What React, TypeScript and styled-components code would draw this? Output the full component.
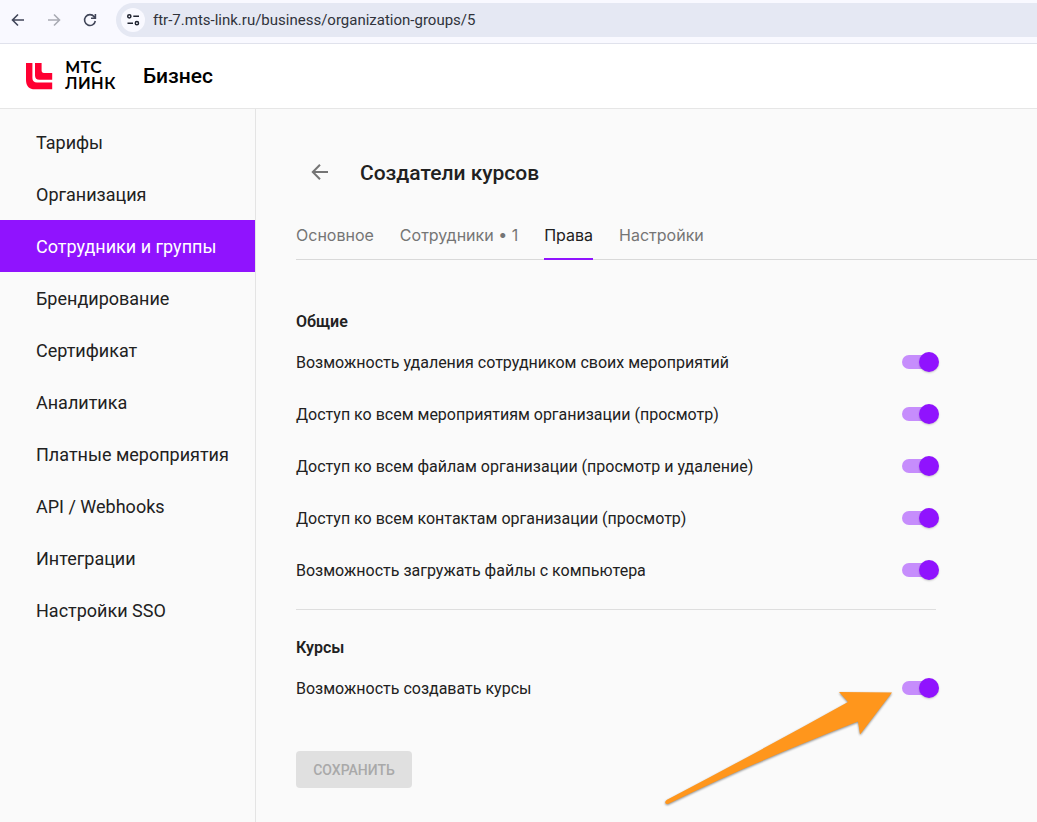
import React from "react";
import styled, { createGlobalStyle } from "styled-components";

const GlobalStyle = createGlobalStyle`
  * { box-sizing: border-box; }
  html, body, #root { height: 100%; }
  body {
    margin: 0;
    background: #fafafa;
    color: #212121;
    font-family: Roboto, "Noto Sans", sans-serif;
    font-size: 16px;
    overflow-x: hidden;
  }
  button, input { font-family: inherit; }
`;

const Page = styled.div`
  min-height: 100%;
  display: flex;
  flex-direction: column;
`;

const BrowserBar = styled.div`
  display: flex;
  align-items: center;
  gap: 16px;
  height: 44px;
  padding: 0 0 4px 8px;
  background: #f9f9ff;
  border-bottom: 1px solid #e0e2ec;
`;

const BarButton = styled.button<{ $color?: string }>`
  display: flex;
  width: 20px;
  height: 20px;
  padding: 0;
  border: 0;
  background: none;
  color: ${(p) => p.$color ?? "#414659"};
`;

const Address = styled.div`
  display: flex;
  align-items: center;
  gap: 8px;
  flex: 1;
  height: 34px;
  padding-left: 5px;
  border-radius: 17px 0 0 17px;
  background: #e5e8f3;
`;

const SiteButton = styled.button`
  display: flex;
  padding: 0;
  border: 0;
  border-radius: 50%;
  background: #f9f9ff;
  color: #1f2330;
`;

const AddressInput = styled.input`
  flex: 1;
  min-width: 0;
  padding: 0;
  border: 0;
  outline: 0;
  background: none;
  color: #30333b;
  font-size: 15px;
`;

const Header = styled.header`
  display: flex;
  align-items: center;
  height: 65px;
  padding-left: 25px;
  background: #fff;
  border-bottom: 1px solid #e6e6e6;
`;

const Brand = styled.a`
  display: flex;
  align-items: center;
  gap: 12px;
  width: 118px;
  color: #000;
  text-decoration: none;
`;

const BrandName = styled.span`
  font: 600 16px/16px Montserrat, "DejaVu Sans", sans-serif;
`;

const Product = styled.span`
  font-size: 21px;
  font-weight: 500;
  color: #000;
`;

const Body = styled.div`
  display: flex;
  flex: 1;
`;

const Sidebar = styled.nav`
  flex: 0 0 256px;
  padding-top: 7px;
  border-right: 1px solid #e4e4e4;
`;

const NavLink = styled.a<{ $active: boolean }>`
  display: flex;
  align-items: center;
  height: 52px;
  padding-left: 36px;
  font-size: 18px;
  white-space: nowrap;
  text-decoration: none;
  color: ${(p) => (p.$active ? "#fff" : "#212121")};
  background: ${(p) => (p.$active ? "#9013fe" : "transparent")};
`;

const Main = styled.main`
  flex: 1;
  min-width: 0;
  padding: 44px 0 34px 40px;
`;

const TitleRow = styled.div`
  display: flex;
  align-items: center;
  gap: 32px;
  height: 40px;
  padding-left: 12px;
`;

const BackButton = styled.button`
  display: flex;
  padding: 0;
  border: 0;
  background: none;
  color: #757575;
`;

const Title = styled.h1`
  margin: 0;
  font-size: 21px;
  font-weight: 500;
`;

const Tabs = styled.div`
  display: flex;
  gap: 26px;
  height: 67px;
  border-bottom: 1px solid #d9d9d9;
  font-family: Inter, sans-serif;
`;

const Tab = styled.a<{ $active: boolean }>`
  display: flex;
  align-items: flex-end;
  height: 67px;
  padding-bottom: 13px;
  white-space: nowrap;
  text-decoration: none;
  color: ${(p) => (p.$active ? "#212121" : "#757575")};
  border-bottom: 2px solid ${(p) => (p.$active ? "#9013fe" : "transparent")};
`;

const Form = styled.form`
  max-width: 640px;
  padding-top: 50px;
`;

const Section = styled.section`
  position: relative;
  & + & {
    margin-top: 13px;
    padding-top: 26px;
    border-top: 1px solid #dedede;
  }
`;

const SectionTitle = styled.h2`
  margin: 0;
  font-size: 16px;
  line-height: 24px;
  font-weight: 600;
`;

const Row = styled.label`
  display: flex;
  align-items: center;
  justify-content: space-between;
  height: 52px;
  &:first-of-type { margin-top: 2px; }
`;

const Switch = styled.input`
  appearance: none;
  flex: none;
  display: flex;
  align-items: center;
  width: 34px;
  height: 14px;
  margin: 0;
  border-radius: 7px;
  background: #bdbdbd;
  &::before {
    content: "";
    flex: none;
    width: 20px;
    height: 20px;
    border-radius: 50%;
    background: #fff;
    box-shadow: 0 1px 2px rgba(0, 0, 0, 0.2);
  }
  &:checked { background: #c68dfc; }
  &:checked::before { margin-left: 17px; background: #9013fe; }
`;

const SaveButton = styled.button`
  height: 37px;
  width: 116px;
  margin-top: 37px;
  padding: 0;
  border: 0;
  border-radius: 4px;
  background: #e0e0e0;
  color: #a9a9a9;
  font-size: 14px;
  font-weight: 500;
`;

const Pointer = styled.svg`
  position: absolute;
  right: 36px;
  top: 74px;
  pointer-events: none;
`;

const navItems = [
  "Тарифы", "Организация", "Сотрудники и группы", "Брендирование", "Сертификат",
  "Аналитика", "Платные мероприятия", "API / Webhooks", "Интеграции", "Настройки SSO",
];
const tabs = ["Основное", "Сотрудники • 1", "Права", "Настройки"];
const commonRights = [
  "Возможность удаления сотрудником своих мероприятий",
  "Доступ ко всем мероприятиям организации (просмотр)",
  "Доступ ко всем файлам организации (просмотр и удаление)",
  "Доступ ко всем контактам организации (просмотр)",
  "Возможность загружать файлы с компьютера",
];

function Right({ label }: { label: string }) {
  return (
    <Row>
      {label}
      <Switch type="checkbox" role="switch" defaultChecked />
    </Row>
  );
}

export default function App() {
  return (
    <>
      <GlobalStyle />
      <Page>
        <BrowserBar>
          <BarButton aria-label="Назад">
            <svg width="20" height="20" fill="none" stroke="currentColor" strokeWidth="1.6">
              <path d="M16 10H5M10 4.5L4.5 10L10 15.5" />
            </svg>
          </BarButton>
          <BarButton aria-label="Вперёд" $color="#a9abb4">
            <svg width="20" height="20" fill="none" stroke="currentColor" strokeWidth="1.6">
              <path d="M4 10H15M10 4.5L15.5 10L10 15.5" />
            </svg>
          </BarButton>
          <BarButton aria-label="Обновить">
            <svg width="20" height="20" fill="none" stroke="currentColor" strokeWidth="1.6">
              <path d="M15.3 11A5.4 5.4 0 1 1 14.2 6.7L15.3 8M15.4 4V8.3H11" />
            </svg>
          </BarButton>
          <Address>
            <SiteButton aria-label="Сведения о сайте">
              <svg width="24" height="24" fill="none" stroke="currentColor" strokeWidth="1.5">
                <circle cx="8.3" cy="8.3" r="1.6" />
                <path d="M12.3 8.3H18M6.5 15.2H12" />
                <circle cx="15.9" cy="15.2" r="1.6" />
              </svg>
            </SiteButton>
            <AddressInput aria-label="Адрес" defaultValue="ftr-7.mts-link.ru/business/organization-groups/5" />
          </Address>
        </BrowserBar>
        <Header>
          <Brand href="#">
            <svg width="28" height="28" fill="#ff0032">
              <path d="M1 1H7.4V16C7.4 19 9 20.4 12 20.4H27.2V27.3H10C4 27.3 1 24 1 18Z" />
              <path d="M10 1H16.6V8.6C16.6 10 17.4 11 19 11H27.2V17.8H14.5C11.5 17.8 10 16.2 10 13.5Z" />
            </svg>
            <BrandName>МТС<br />ЛИНК</BrandName>
          </Brand>
          <Product>Бизнес</Product>
        </Header>
        <Body>
          <Sidebar>
            {navItems.map((n) => (
              <NavLink key={n} href="#" $active={n === "Сотрудники и группы"}>{n}</NavLink>
            ))}
          </Sidebar>
          <Main>
            <TitleRow>
              <BackButton aria-label="Назад к группам">
                <svg width="20" height="20" viewBox="0 1 20 20" fill="none" stroke="currentColor" strokeWidth="2">
                  <path d="M20 10H6M12 2.8L4.8 10L12 17.2M5 10H8" />
                </svg>
              </BackButton>
              <Title>Создатели курсов</Title>
            </TitleRow>
            <Tabs>
              {tabs.map((t) => (
                <Tab key={t} href="#" $active={t === "Права"}>{t}</Tab>
              ))}
            </Tabs>
            <Form onSubmit={(e) => e.preventDefault()}>
              <Section>
                <SectionTitle>Общие</SectionTitle>
                {commonRights.map((r) => <Right key={r} label={r} />)}
              </Section>
              <Section>
                <SectionTitle>Курсы</SectionTitle>
                <Right label="Возможность создавать курсы" />
                <Pointer width="240" height="126" viewBox="660 684 240 126">
                  <g style={{ filter: "drop-shadow(0 1.5px 1px rgba(0,0,0,.45))" }}>
                    <path
                      fill="#ff961c"
                      d="M839 692L892 692.5L860 734.5L858 721.5C795 746 731 773 669 803.5Q666 805 665.2 802.5Q665 801 667 799.8Q760 751 848 702Z"
                    />
                  </g>
                </Pointer>
              </Section>
              <SaveButton disabled>СОХРАНИТЬ</SaveButton>
            </Form>
          </Main>
        </Body>
      </Page>
    </>
  );
}
